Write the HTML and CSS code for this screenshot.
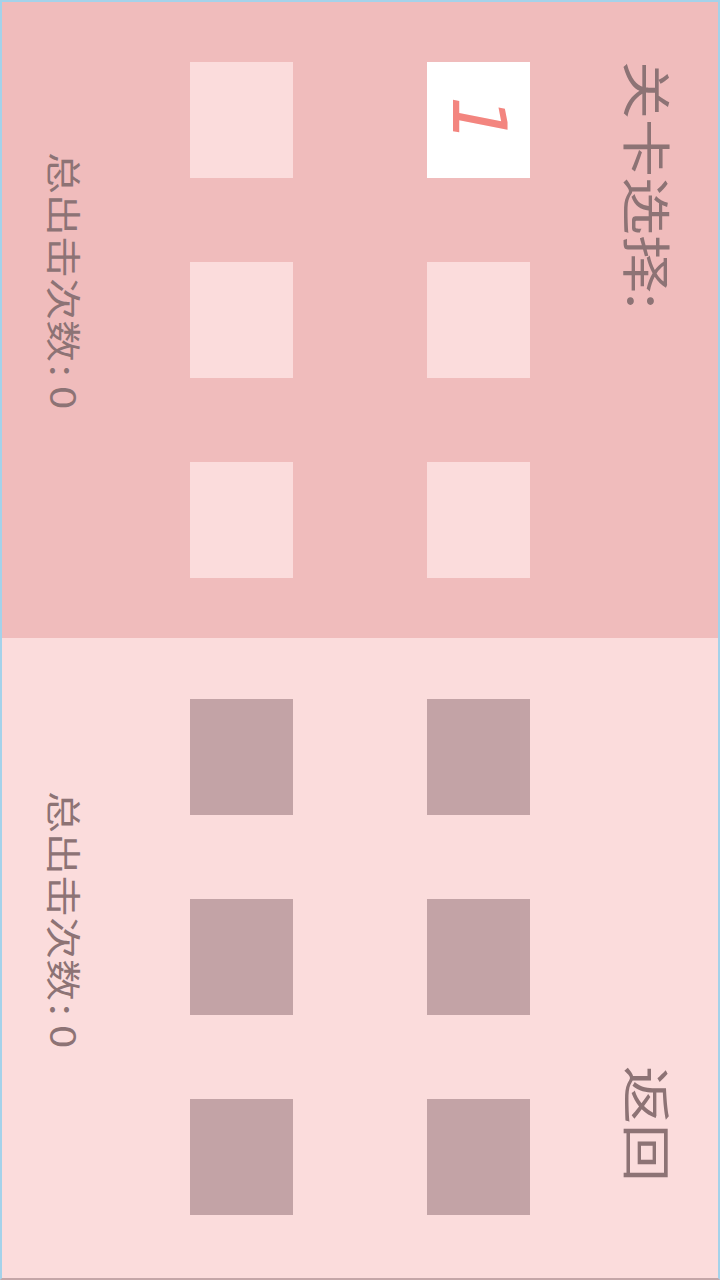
FILE: index.html
```html
<!DOCTYPE html>
<html lang="zh-CN">
<head>
<meta charset="utf-8">
<title>关卡选择</title>
<link rel="stylesheet" href="styles.css">
</head>
<body>
<div class="screen">
  <section class="panel panel-top">
    <div class="vtext stats">总出击次数<span class="colon">:</span> 0</div>
    <div class="col col-a">
      <div class="tile"></div>
      <div class="tile"></div>
      <div class="tile"></div>
    </div>
    <div class="col col-b">
      <div class="tile current"><span class="num">1</span></div>
      <div class="tile"></div>
      <div class="tile"></div>
    </div>
    <div class="vtext title">关卡选择:</div>
  </section>
  <section class="panel panel-bottom">
    <div class="vtext stats stats-bottom">总出击次数<span class="colon">:</span> 0</div>
    <div class="col col-a col-bottom">
      <div class="tile dark"></div>
      <div class="tile dark"></div>
      <div class="tile dark"></div>
    </div>
    <div class="col col-b col-bottom">
      <div class="tile dark"></div>
      <div class="tile dark"></div>
      <div class="tile dark"></div>
    </div>
    <div class="vtext title back">返回</div>
  </section>
</div>
</body>
</html>
```
FILE: styles.css
```css
html, body {
  margin: 0;
  padding: 0;
}
body {
  width: 720px;
  height: 1280px;
  overflow: hidden;
  font-family: "Noto Sans CJK SC", "Noto Sans", sans-serif;
  background: #fbdcdc;
}
.screen {
  box-sizing: border-box;
  width: 720px;
  height: 1280px;
  border: 2px solid #a4d2ea;
  border-bottom-color: #c4a6a8;
  display: flex;
  flex-direction: column;
}
.panel {
  display: flex;
  align-items: flex-start;
}
.panel-top {
  height: 636px;
  flex: none;
  background: #f0bcbc;
}
.panel-bottom {
  flex: 1;
  background: #fbdcdc;
}
.vtext {
  writing-mode: vertical-rl;
  text-orientation: sideways;
  color: #8d7375;
  white-space: nowrap;
  transform: scaleX(0.85);
}
.stats {
  font-size: 42px;
  line-height: 42px;
  margin-left: 42px;
  margin-top: 150px;
}
.colon {
  margin-inline-start: 3px;
}
.stats-bottom {
  margin-top: 153px;
}
.col {
  display: flex;
  flex-direction: column;
  gap: 84px;
  width: 103px;
  margin-top: 60px;
}
.col-bottom {
  margin-top: 61px;
}
.col-a {
  margin-left: 104px;
}
.col-b {
  margin-left: 134px;
}
.tile {
  width: 103px;
  height: 116px;
  background: #fbdcdc;
}
.tile.dark {
  background: #c3a3a6;
}
.tile.current {
  background: #ffffff;
  display: flex;
  align-items: center;
  justify-content: center;
}
.num {
  font-family: "DejaVu Sans", sans-serif;
  font-style: italic;
  font-size: 75px;
  line-height: 1;
  color: #f3857f;
  writing-mode: vertical-rl;
  text-orientation: sideways;
}
.title {
  font-size: 58px;
  line-height: 58px;
  margin-left: 90px;
  margin-top: 59px;
}
.back {
  margin-top: 428px;
}
```
